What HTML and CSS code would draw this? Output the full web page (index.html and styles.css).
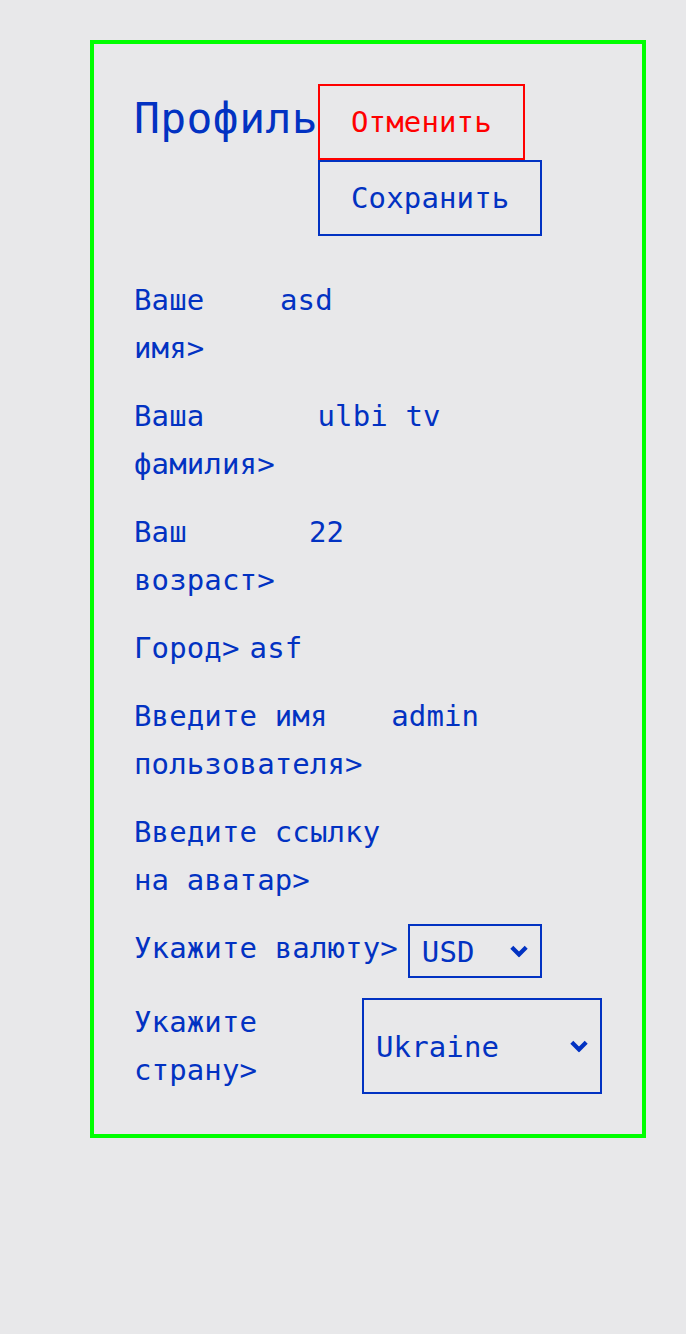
FILE: index.html
```html
<!DOCTYPE html>
<html lang="ru">
<head>
<meta charset="utf-8">
<title>Профиль</title>
<link rel="stylesheet" href="styles.css">
</head>
<body>
<div class="page">
  <div class="card">
    <div class="header">
      <h1 class="title">Профиль</h1>
      <div class="actions">
        <button class="btn btn-cancel" type="button">Отменить</button>
        <button class="btn btn-save" type="button">Сохранить</button>
      </div>
    </div>
    <div class="form">
      <div class="field">
        <div class="label">Ваше имя&gt;</div>
        <div class="control"><input class="input" type="text" value="asd"></div>
      </div>
      <div class="field">
        <div class="label">Ваша фамилия&gt;</div>
        <div class="control"><input class="input" type="text" value="ulbi tv"></div>
      </div>
      <div class="field">
        <div class="label">Ваш возраст&gt;</div>
        <div class="control"><input class="input" type="text" value="22"></div>
      </div>
      <div class="field">
        <div class="label">Город&gt;</div>
        <div class="control"><input class="input" type="text" value="asf"></div>
      </div>
      <div class="field">
        <div class="label">Введите имя пользователя&gt;</div>
        <div class="control"><input class="input" type="text" value="admin"></div>
      </div>
      <div class="field">
        <div class="label">Введите ссылку на аватар&gt;</div>
        <div class="control"><input class="input" type="text" value=""></div>
      </div>
      <div class="field">
        <div class="label">Укажите валюту&gt;</div>
        <div class="select-wrap select-currency">
          <select class="select">
            <option>USD</option>
            <option>EUR</option>
            <option>RUB</option>
          </select>
          <svg class="chevron" viewBox="0 0 20 13" width="20" height="13" aria-hidden="true"><path d="M2.8 2.8 L10 10 L17.2 2.8" fill="none" stroke="currentColor" stroke-width="4.2"/></svg>
        </div>
      </div>
      <div class="field">
        <div class="label">Укажите страну&gt;</div>
        <div class="select-wrap select-country">
          <select class="select">
            <option>Ukraine</option>
            <option>Russia</option>
            <option>Belarus</option>
            <option>Kazakhstan</option>
            <option>Armenia</option>
          </select>
          <svg class="chevron" viewBox="0 0 20 13" width="20" height="13" aria-hidden="true"><path d="M2.8 2.8 L10 10 L17.2 2.8" fill="none" stroke="currentColor" stroke-width="4.2"/></svg>
        </div>
      </div>
    </div>
  </div>
</div>
</body>
</html>
```

FILE: styles.css
```css
* {
  box-sizing: border-box;
}

html, body {
  margin: 0;
  padding: 0;
  background: #e8e8ea;
}

body {
  min-height: 1334px;
  color: #0232c2;
  font-family: "DejaVu Sans Mono", monospace;
  font-size: 29px;
  line-height: 48px;
  letter-spacing: 0.13px;
}

.page {
  padding: 40px 0 0 90px;
}

.card {
  width: 556px;
  border: 4px solid #00ff00;
  padding: 40px;
}

.header {
  display: flex;
  align-items: flex-start;
  margin-bottom: 40px;
}

.title {
  flex: 0 0 auto;
  margin: 0;
  font-family: "DejaVu Sans Mono", monospace;
  font-weight: 400;
  font-size: 43px;
  line-height: 68px;
  letter-spacing: 0.4px;
  color: #0232c2;
}

.actions {
  flex: 1 1 0;
  min-width: 0;
  display: flex;
  flex-wrap: wrap;
  align-items: flex-start;
}

.btn {
  height: 76px;
  padding: 0 31px;
  background: transparent;
  border: 2px solid #0232c2;
  font-family: "DejaVu Sans Mono", monospace;
  font-size: 29px;
  line-height: 72px;
  letter-spacing: 0.13px;
  color: #0232c2;
  cursor: pointer;
}

.btn-cancel {
  border-color: #ff0000;
  color: #ff0000;
}

.form {
  display: flex;
  flex-direction: column;
  gap: 20px;
}

.field {
  display: flex;
  align-items: stretch;
}

.label {
  flex: 0 1 auto;
  margin-right: 10px;
}

.control {
  flex: 0 1 375px;
  min-width: 0;
}

.input {
  display: block;
  width: 100%;
  height: 48px;
  margin: 0;
  padding: 0;
  border: none;
  outline: none;
  background: transparent;
  font-family: "DejaVu Sans Mono", monospace;
  font-size: 29px;
  line-height: 48px;
  letter-spacing: 0.13px;
  color: #0232c2;
}

.select-wrap {
  position: relative;
  display: flex;
  color: #0232c2;
}

.select-currency {
  flex: 0 0 134px;
  height: 54px;
}

.select-country {
  flex: 0 0 240px;
}

.select {
  appearance: none;
  -webkit-appearance: none;
  width: 100%;
  margin: 0;
  padding: 2px 40px 0 12px;
  border: 2px solid #0232c2;
  border-radius: 0;
  background: transparent;
  font-family: "DejaVu Sans Mono", monospace;
  font-size: 29px;
  letter-spacing: 0.13px;
  color: #0232c2;
  outline: none;
}

.chevron {
  position: absolute;
  right: 13px;
  top: 50%;
  transform: translateY(-50%);
  pointer-events: none;
}
```
